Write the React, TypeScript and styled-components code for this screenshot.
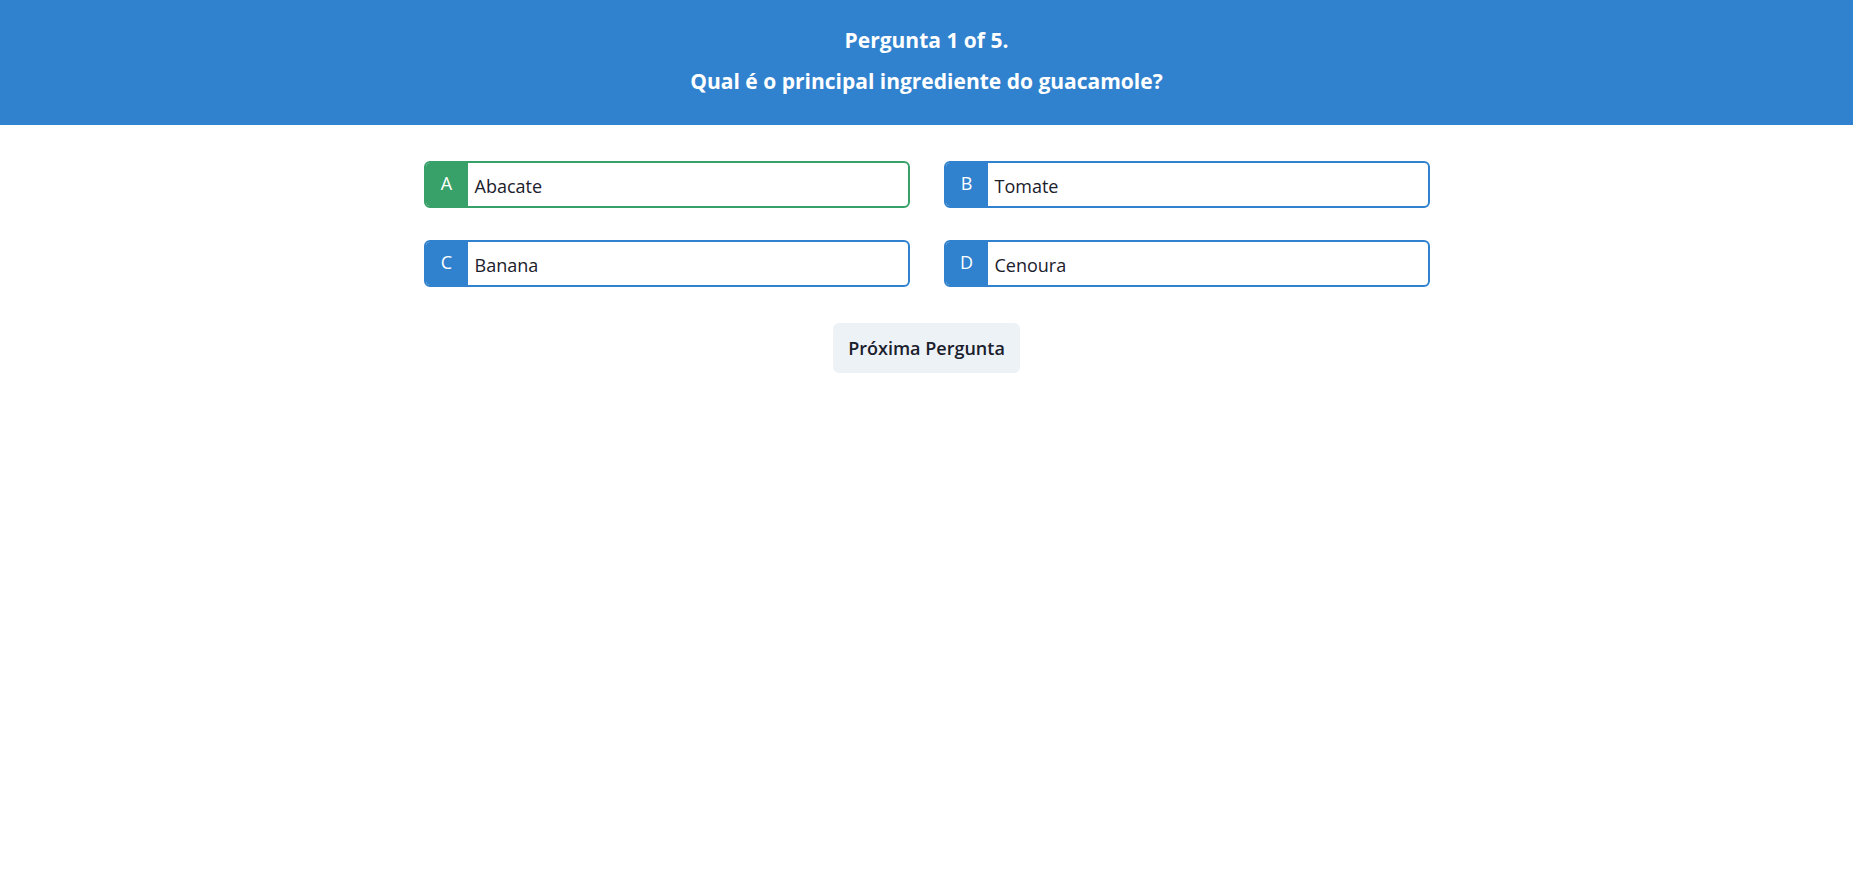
import React from "react";
import styled, { createGlobalStyle } from "styled-components";

const GlobalStyle = createGlobalStyle`
    * {
        box-sizing: border-box;
    }
    body {
        margin: 0;
        background: #ffffff;
        font-family: "Open Sans", "Noto Sans", "Liberation Sans", sans-serif;
        color: #1a202c;
    }
`;

const Header = styled.header`
    height: 125px;
    padding: 25px 0 28px;
    display: flex;
    flex-direction: column;
    align-items: center;
    gap: 11px;
    background-color: #3182ce;
    color: #ffffff;
`;

const Title = styled.p`
    margin: 0;
    font-size: 21px;
    line-height: 30px;
    font-weight: 700;
`;

const Main = styled.main`
    padding-top: 36px;
    display: flex;
    flex-direction: column;
    align-items: center;
    gap: 36px;
`;

const Options = styled.div`
    display: grid;
    grid-template-columns: 486px 486px;
    column-gap: 34px;
    row-gap: 32px;
`;

const Option = styled.div<{ $color: string }>`
    height: 47px;
    display: flex;
    align-items: stretch;
    border: 2px solid ${(p) => p.$color};
    border-radius: 6px;
    overflow: hidden;
    cursor: pointer;
    .letter {
        width: 42px;
        display: flex;
        align-items: center;
        justify-content: center;
        padding-bottom: 3px;
        background-color: ${(p) => p.$color};
        color: #ffffff;
        font-size: 18px;
    }
    .label {
        display: flex;
        align-items: center;
        padding-left: 7px;
        padding-top: 2px;
        font-size: 18px;
        color: #1a202c;
    }
`;

const NextButton = styled.button`
    height: 50px;
    padding: 0 15px;
    border: none;
    border-radius: 6px;
    background-color: #edf2f7;
    color: #1a202c;
    font-family: inherit;
    font-size: 18px;
    font-weight: 600;
    cursor: pointer;
`;

const options = [
    { letter: "A", text: "Abacate", correct: true },
    { letter: "B", text: "Tomate", correct: false },
    { letter: "C", text: "Banana", correct: false },
    { letter: "D", text: "Cenoura", correct: false },
];

const App: React.FC = () => {
    return (
        <>
            <GlobalStyle />
            <Header>
                <Title>Pergunta 1 of 5.</Title>
                <Title>Qual é o principal ingrediente do guacamole?</Title>
            </Header>
            <Main>
                <Options>
                    {options.map((o) => (
                        <Option key={o.letter} $color={o.correct ? "#38a169" : "#3182ce"}>
                            <span className="letter">{o.letter}</span>
                            <span className="label">{o.text}</span>
                        </Option>
                    ))}
                </Options>
                <NextButton>Próxima Pergunta</NextButton>
            </Main>
        </>
    );
};

export default App;
